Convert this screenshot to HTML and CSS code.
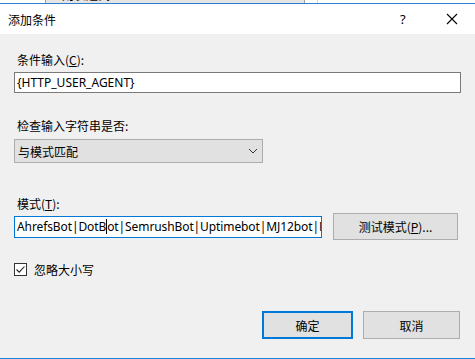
FILE: index.html
```html
<!DOCTYPE html>
<html lang="zh-CN">
<head>
    <meta charset="UTF-8">
    <title>添加条件</title>
    <link rel="stylesheet" href="styles.css">
</head>
<body>
    <div class="backdrop">
        <div class="back-gap"></div>
        <div class="back-field"><span>正则表达式</span></div>
        <div class="back-rest"><div class="back-line"></div></div>
    </div>
    <div class="dialog">
        <div class="title-bar">
            <span class="title">添加条件</span>
            <span class="help">?</span>
            <span class="close">
                <svg width="12" height="12" viewBox="0 0 12 12"><path d="M1 1 L11 11 M11 1 L1 11" stroke="#000" stroke-width="1.1" fill="none"/></svg>
            </span>
        </div>
        <div class="content">
            <div class="label first">条件输入(<u>C</u>):</div>
            <div class="field wide">{HTTP_USER_AGENT}</div>

            <div class="label second">检查输入字符串是否:</div>
            <div class="select">
                <span>与模式匹配</span>
                <svg width="10" height="6" viewBox="0 0 10 6"><path d="M1 1 L5 5 L9 1" stroke="#333" stroke-width="1" fill="none"/></svg>
            </div>

            <div class="label third">模式(<u>T</u>):</div>
            <div class="pattern-row">
                <div class="field pattern">AhrefsBot|DotB<span class="caret"></span>ot|SemrushBot|Uptimebot|MJ12bot|MauiBot</div>
                <div class="btn test">测试模式(<u>P</u>)...</div>
            </div>

            <div class="check-row">
                <span class="checkbox">
                    <svg width="11" height="11" viewBox="0 0 11 11"><path d="M1.5 5.5 L4.2 8.2 L9.5 2.5" stroke="#222" stroke-width="1.1" fill="none"/></svg>
                </span>
                <span>忽略大小写</span>
            </div>

            <div class="footer">
                <div class="btn ok">确定</div>
                <div class="btn cancel">取消</div>
            </div>
        </div>
    </div>
</body>
</html>
```

FILE: styles.css
```css
body {
    margin: 0;
    width: 475px;
    height: 359px;
    overflow: hidden;
    font-family: "Noto Sans", "Noto Sans CJK SC", sans-serif;
    font-size: 12px;
    color: #000;
    background: #f0f0f0;
}

.backdrop {
    display: flex;
    height: 3px;
    background: #fff;
    overflow: hidden;
}

.back-gap {
    width: 45px;
}

.back-field {
    width: 258px;
    border-right: 1px solid #a0a0a0;
    border-left: 1px solid #a0a0a0;
    background: #e5e5e5;
    position: relative;
}

.back-field span {
    position: absolute;
    left: 4px;
    top: -11px;
    font-size: 12px;
    line-height: 14px;
}

.back-rest {
    flex: 1;
    position: relative;
}

.back-line {
    position: absolute;
    left: 12px;
    top: 0;
    width: 1px;
    height: 3px;
    background: #d8d8d8;
}

.dialog {
    height: 354px;
    border-top: 1px solid #2b7fd0;
    border-bottom: 2px solid #1883d7;
    display: flex;
    flex-direction: column;
}

.title-bar {
    height: 30px;
    background: #fff;
    display: flex;
    align-items: center;
    font-family: "Noto Sans CJK SC", sans-serif;
}

.title {
    margin-left: 8px;
    flex: 1;
}

.help {
    width: 10px;
    font-size: 13px;
    font-family: "Noto Sans", sans-serif;
    margin-right: 36px;
}

.close {
    display: flex;
    margin-right: 17px;
}

.content {
    flex: 1;
    padding-left: 14px;
    display: flex;
    flex-direction: column;
}

.label {
    line-height: 16px;
    padding-left: 3px;
    font-family: "Noto Sans CJK SC", sans-serif;
}

.label u {
    text-underline-offset: 1px;
}

.label.first {
    margin-top: 18px;
}

.label.second {
    margin-top: 25px;
}

.label.third {
    margin-top: 33px;
}

.field {
    box-sizing: border-box;
    background: #fff;
    border: 1px solid #7a7a7a;
    white-space: nowrap;
    overflow: hidden;
    padding-left: 2px;
}

.field.wide {
    width: 447px;
    height: 21px;
    line-height: 19px;
    margin-top: 4px;
}

.select {
    box-sizing: border-box;
    width: 249px;
    height: 24px;
    margin-top: 5px;
    background: #e1e1e1;
    border: 1px solid #adadad;
    display: flex;
    align-items: center;
    justify-content: space-between;
    padding: 0 4px 0 3px;
    font-family: "Noto Sans CJK SC", sans-serif;
}

.pattern-row {
    display: flex;
    align-items: center;
    margin-top: 1px;
    height: 27px;
}

.field.pattern {
    flex-shrink: 0;
    width: 308px;
    height: 22px;
    line-height: 20px;
    border-color: #0078d7;
    letter-spacing: -0.1px;
}

.caret {
    display: inline-block;
    width: 1px;
    height: 15px;
    background: #000;
    vertical-align: -3px;
}

.btn {
    box-sizing: border-box;
    background: #e1e1e1;
    border: 1px solid #adadad;
    display: flex;
    align-items: center;
    justify-content: center;
    font-family: "Noto Sans CJK SC", sans-serif;
}

.btn.test {
    flex-shrink: 0;
    width: 125px;
    height: 27px;
    margin-left: 11px;
}

.check-row {
    display: flex;
    align-items: center;
    margin-top: 21px;
    font-family: "Noto Sans CJK SC", sans-serif;
}

.checkbox {
    box-sizing: border-box;
    width: 13px;
    height: 13px;
    border: 1px solid #333;
    background: #fff;
    display: flex;
    align-items: center;
    justify-content: center;
    margin-right: 7px;
}

.footer {
    display: flex;
    margin-top: 33px;
    padding-left: 248px;
}

.btn.ok {
    width: 91px;
    height: 28px;
    border: 2px solid #0078d7;
}

.btn.cancel {
    width: 97px;
    height: 28px;
    margin-left: 10px;
}
```
